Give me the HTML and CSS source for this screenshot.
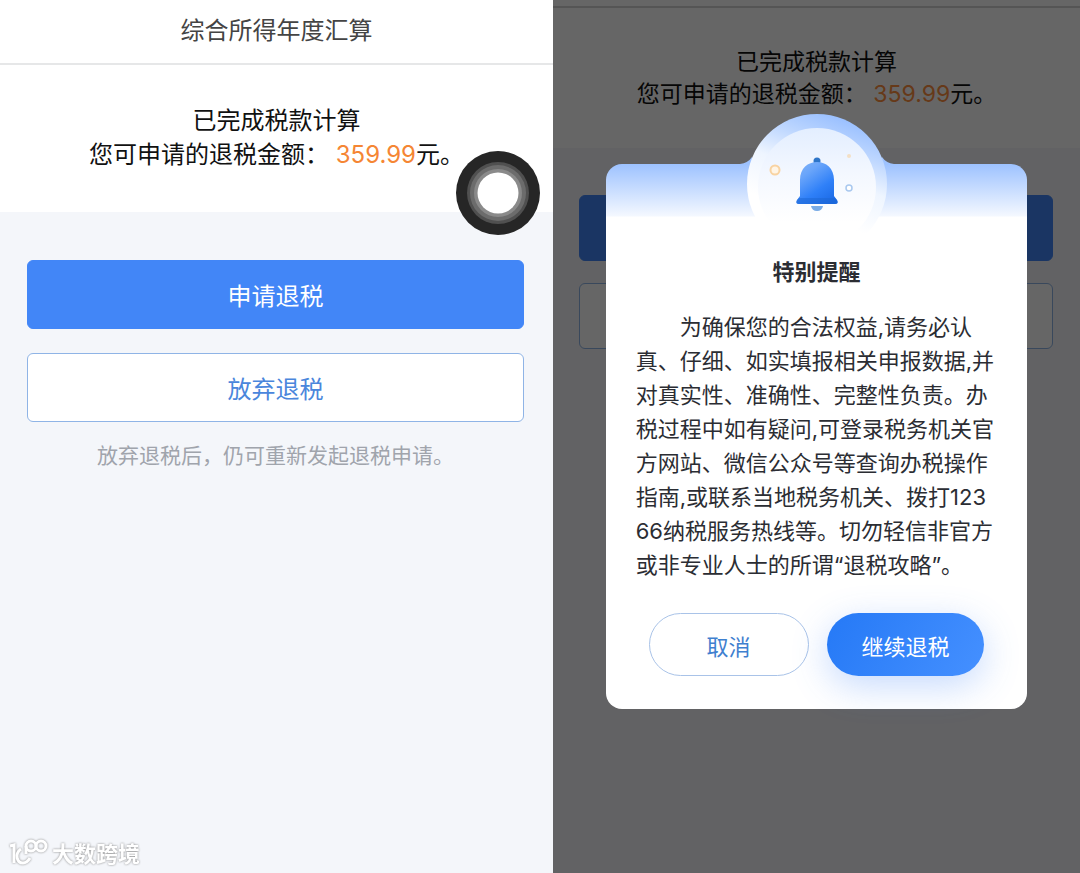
FILE: index.html
```html
<!DOCTYPE html>
<html lang="zh-CN">
<head>
    <meta charset="UTF-8">
    <meta name="viewport" content="width=device-width, initial-scale=1.0">
    <link rel="stylesheet" href="styles.css">
    <title>综合所得年度汇算</title>
</head>
<body>
    <main class="screens">
        <section class="screen">
            <header class="topbar">
                <h1>综合所得年度汇算</h1>
            </header>

            <div class="summary">
                <p>已完成税款计算</p>
                <p>您可申请的退税金额： <span class="amount">359.99</span>元。</p>
            </div>

            <div class="actions">
                <button type="button" class="btn btn-primary">申请退税</button>
                <button type="button" class="btn btn-outline">放弃退税</button>
                <p class="note">放弃退税后，仍可重新发起退税申请。</p>
            </div>

            <svg class="touch" viewBox="0 0 84 84" aria-hidden="true">
                <circle cx="42" cy="42" r="42" fill="#262626"/>
                <circle cx="42" cy="42" r="31" fill="#505050"/>
                <circle cx="42" cy="42" r="28" fill="#6c6c6c"/>
                <circle cx="42" cy="42" r="24" fill="#8a8a8a"/>
                <circle cx="42" cy="42" r="20.5" fill="#fff"/>
            </svg>

            <div class="watermark">
                <svg viewBox="0 0 40 30" aria-hidden="true">
                    <g fill="none" stroke="#fff" stroke-width="3">
                        <path d="M1 7 L5 6 V24"/>
                        <path d="M12 10 C5 15 8 24 14 24 Q18 24 21 19"/>
                        <path d="M17 15 V7"/>
                        <circle cx="22" cy="7" r="5"/>
                        <circle cx="32" cy="7" r="5"/>
                    </g>
                </svg>
                <span>大数跨境</span>
            </div>
        </section>

        <section class="screen screen-dimmed">
            <div class="topbar-edge"></div>

            <div class="summary">
                <p>已完成税款计算</p>
                <p>您可申请的退税金额： <span class="amount">359.99</span>元。</p>
            </div>

            <div class="actions">
                <button type="button" class="btn btn-primary" aria-label="申请退税"></button>
                <button type="button" class="btn btn-outline" aria-label="放弃退税"></button>
            </div>

            <div class="overlay">
                <div class="modal" role="dialog" aria-labelledby="modalTitle">
                    <svg class="bell" viewBox="0 0 140 140" aria-hidden="true">
                        <defs>
                            <linearGradient id="disc" x1="0.65" y1="0" x2="0.4" y2="0.7">
                                <stop offset="0" stop-color="#97beff"/>
                                <stop offset="0.3" stop-color="#bed7ff"/>
                                <stop offset="0.6" stop-color="#eef5ff"/>
                                <stop offset="1" stop-color="#fff"/>
                            </linearGradient>
                            <linearGradient id="inner" x1="0" y1="0" x2="0" y2="1">
                                <stop offset="0" stop-color="#e3eeff"/>
                                <stop offset="0.4" stop-color="#f4f8ff"/>
                                <stop offset="0.8" stop-color="#fff"/>
                            </linearGradient>
                            <linearGradient id="body" x1="0.1" y1="0" x2="0.8" y2="1">
                                <stop offset="0" stop-color="#7fb2f8"/>
                                <stop offset="0.25" stop-color="#6aa5fa"/>
                                <stop offset="0.65" stop-color="#2f80f8"/>
                                <stop offset="1" stop-color="#1b6ae6"/>
                            </linearGradient>
                        </defs>
                        <!-- curved joins with the card edge -->
                        <path d="M-7 50 Q1 49 5 43 V51 H-7Z M147 50 Q139 49 135 43 V51 H147Z" fill="#9dc2ff"/>
                        <circle cx="70" cy="70" r="70" fill="url(#disc)"/>
                        <circle cx="70" cy="73" r="59" fill="url(#inner)"/>
                        <circle cx="70" cy="47" r="3.5" fill="#2e75c8"/>
                        <path d="M53 82 V66 C53 54 61 48 70 48 S87 54 87 66 V82 L90 86 Q92 90 88 90 H52 Q48 90 50 86Z" fill="url(#body)"/>
                        <path d="M52 84 H88 L90 86 Q92 90 88 90 H52 Q48 90 50 86Z" fill="#1c66d2" opacity="0.5"/>
                        <path d="M64 92 H76 Q75 97 70 97 T64 92Z" fill="#78abe6"/>
                        <circle cx="28" cy="56" r="4.5" fill="#fff5e6" stroke="#f8d3a2" stroke-width="2"/>
                        <circle cx="102" cy="42" r="2" fill="#f3dfc6"/>
                        <circle cx="102" cy="74" r="3" fill="#fff" stroke="#a9c8ef" stroke-width="1.5"/>
                    </svg>

                    <h2 id="modalTitle">特别提醒</h2>
                    <p class="modal-text">为确保您的合法权益,请务必认真、仔细、如实填报相关申报数据,并对真实性、准确性、完整性负责。办税过程中如有疑问,可登录税务机关官方网站、微信公众号等查询办税操作指南,或联系当地税务机关、拨打12366纳税服务热线等。切勿轻信非官方或非专业人士的所谓“退税攻略”。</p>
                    <div class="modal-actions">
                        <button type="button" class="pill pill-outline">取消</button>
                        <button type="button" class="pill pill-primary">继续退税</button>
                    </div>
                </div>
            </div>
        </section>
    </main>
</body>
</html>
```

FILE: styles.css
```css
* {
    box-sizing: border-box;
}

body {
    margin: 0;
    font-family: Inter, "Noto Sans CJK SC", sans-serif;
    color: #111;
}

h1, h2, p {
    margin: 0;
}

button {
    font-family: inherit;
    cursor: pointer;
}

.screens {
    display: grid;
    grid-template-columns: 553fr 527fr;
    min-height: 100vh;
}

.screen {
    position: relative;
    background-color: #f4f6fa;
}

/* Top */
.topbar {
    padding: 14px 0 15px;
    background-color: #fff;
    border-bottom: 2px solid #e6e7e8;
    text-align: center;
}

.topbar h1 {
    font-size: 24px;
    font-weight: 400;
    line-height: 34px;
    color: #444;
}

.topbar-edge {
    height: 8px;
    background-color: #fff;
    border-bottom: 2px solid #d4d4d4;
}

.summary {
    padding: 39px 0 40px;
    background-color: #fff;
    font-size: 24px;
    line-height: 34px;
    text-align: center;
}

.amount {
    color: #f58634;
}

/* Buttons */
.actions {
    display: flex;
    flex-direction: column;
    gap: 24px;
    padding: 48px 29px 0 27px;
}

.btn {
    height: 69px;
    padding: 0;
    border: 1px solid #4286f7;
    border-radius: 6px;
    font-size: 24px;
}

.btn-primary {
    background-color: #4286f7;
    color: #fff;
}

.btn-outline {
    background-color: #fff;
    border-color: #8fb4e6;
    color: #4a86dc;
}

.note {
    margin-top: -6px;
    font-size: 21px;
    line-height: 32px;
    color: #a0a4ac;
    text-align: center;
}

/* Floating touch button */
.touch {
    position: absolute;
    top: 151px;
    right: 13px;
    width: 84px;
    height: 84px;
}

.watermark {
    position: absolute;
    left: 9px;
    bottom: 4px;
    display: flex;
    align-items: center;
    gap: 3px;
    color: #fff;
    font-size: 22px;
    font-weight: 700;
    line-height: 30px;
    filter: drop-shadow(0 0 1px #888);
}

.watermark svg {
    width: 40px;
    height: 30px;
}

/* Second screen */
.screen-dimmed .summary {
    padding: 38px 0;
    font-size: 23px;
    line-height: 32px;
}

.screen-dimmed .actions {
    gap: 22px;
    padding: 47px 27px 0 26px;
}

.screen-dimmed .btn {
    height: 66px;
}

.screen-dimmed .amount {
    color: #ff9040;
}

.overlay {
    position: absolute;
    inset: 0;
    display: flex;
    justify-content: center;
    align-items: flex-start;
    padding-top: 164px;
    background-color: rgba(0, 0, 0, 0.6);
}

.modal {
    position: relative;
    width: 80%;
    padding: 92px 30px 33px;
    border-radius: 16px;
    background: linear-gradient(#9dc2ff, #f4f8ff 52px, #fff 53px);
    color: #2b2d33;
}

.bell {
    position: absolute;
    top: -50px;
    left: calc(50% - 70px);
    width: 140px;
    height: 140px;
    overflow: visible;
}

.modal h2 {
    font-size: 22px;
    font-weight: 700;
    line-height: 32px;
    text-align: center;
}

.modal-text {
    margin-top: 22px;
    font-size: 22px;
    line-height: 34px;
    text-indent: 2em;
    word-break: break-all;
}

.modal-actions {
    display: flex;
    gap: 18px;
    margin-top: 31px;
    padding: 0 13px;
}

.pill {
    flex: 1;
    height: 63px;
    padding: 0;
    border: 1px solid #a9c3e8;
    border-radius: 32px;
    font-size: 22px;
}

.pill-outline {
    background-color: #fff;
    color: #3f80cf;
}

.pill-primary {
    border: none;
    background: linear-gradient(120deg, #2579f6, #4590ff);
    box-shadow: 0 10px 36px rgba(66, 134, 247, 0.3);
    color: #fff;
}
```
